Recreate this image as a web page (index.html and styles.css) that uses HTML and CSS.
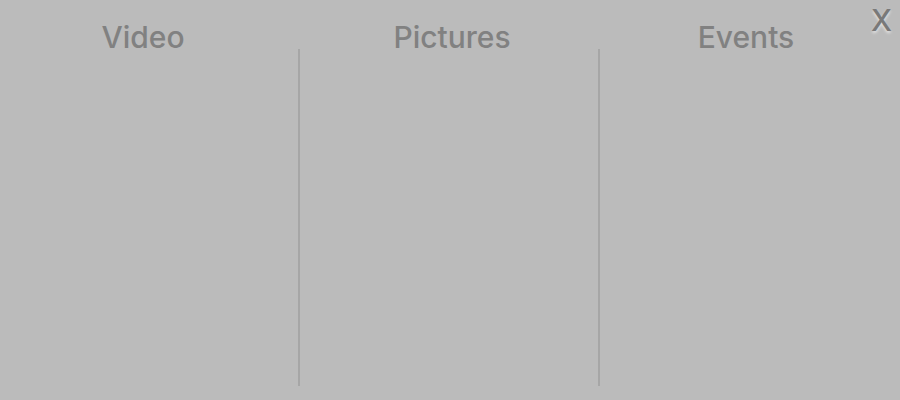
FILE: index.html
```html
<!DOCTYPE html>
<html>
<head>
<meta charset="utf-8">
<link rel="stylesheet" href="styles.css">
</head>
<body>
<div class="panel">
  <div class="columns">
    <section class="col col-video"><h2 class="title">Video</h2><div class="body"></div></section>
    <section class="col col-pictures"><h2 class="title">Pictures</h2><div class="body"></div></section>
    <section class="col col-events"><h2 class="title">Events</h2><div class="body"></div></section>
  </div>
  <button class="close">X</button>
</div>
</body>
</html>
```
FILE: styles.css
```css
html, body {
  margin: 0;
  padding: 0;
  background: #bbbbbb;
}
.panel {
  position: relative;
  width: 900px;
  height: 400px;
  font-family: Inter, "Noto Sans", sans-serif;
}
.columns {
  display: grid;
  grid-template-columns: 298px 300px 302px;
  height: 400px;
}
.col {
  display: flex;
  flex-direction: column;
  align-items: center;
}
.col-video .title { padding-right: 12px; }
.col-pictures .title { padding-left: 8px; }
.col-events .title { padding-right: 6px; }
.title {
  margin: 0;
  padding-top: 26px;
  height: 23px;
  font-size: 30px;
  line-height: 23px;
  font-weight: 500;
  color: #818181;
}
.body {
  flex: 0 0 337px;
  align-self: stretch;
}
.col + .col .body {
  border-left: 2px solid #a6a6a6;
}
.close {
  position: absolute;
  top: 2px;
  right: 8px;
  background: none;
  border: 0;
  padding: 0;
  font-family: Inter, sans-serif;
  font-weight: 500;
  font-size: 30px;
  color: #797979;
  text-shadow: 0 2px 3px rgba(255,255,255,0.6);
  cursor: pointer;
}
```
